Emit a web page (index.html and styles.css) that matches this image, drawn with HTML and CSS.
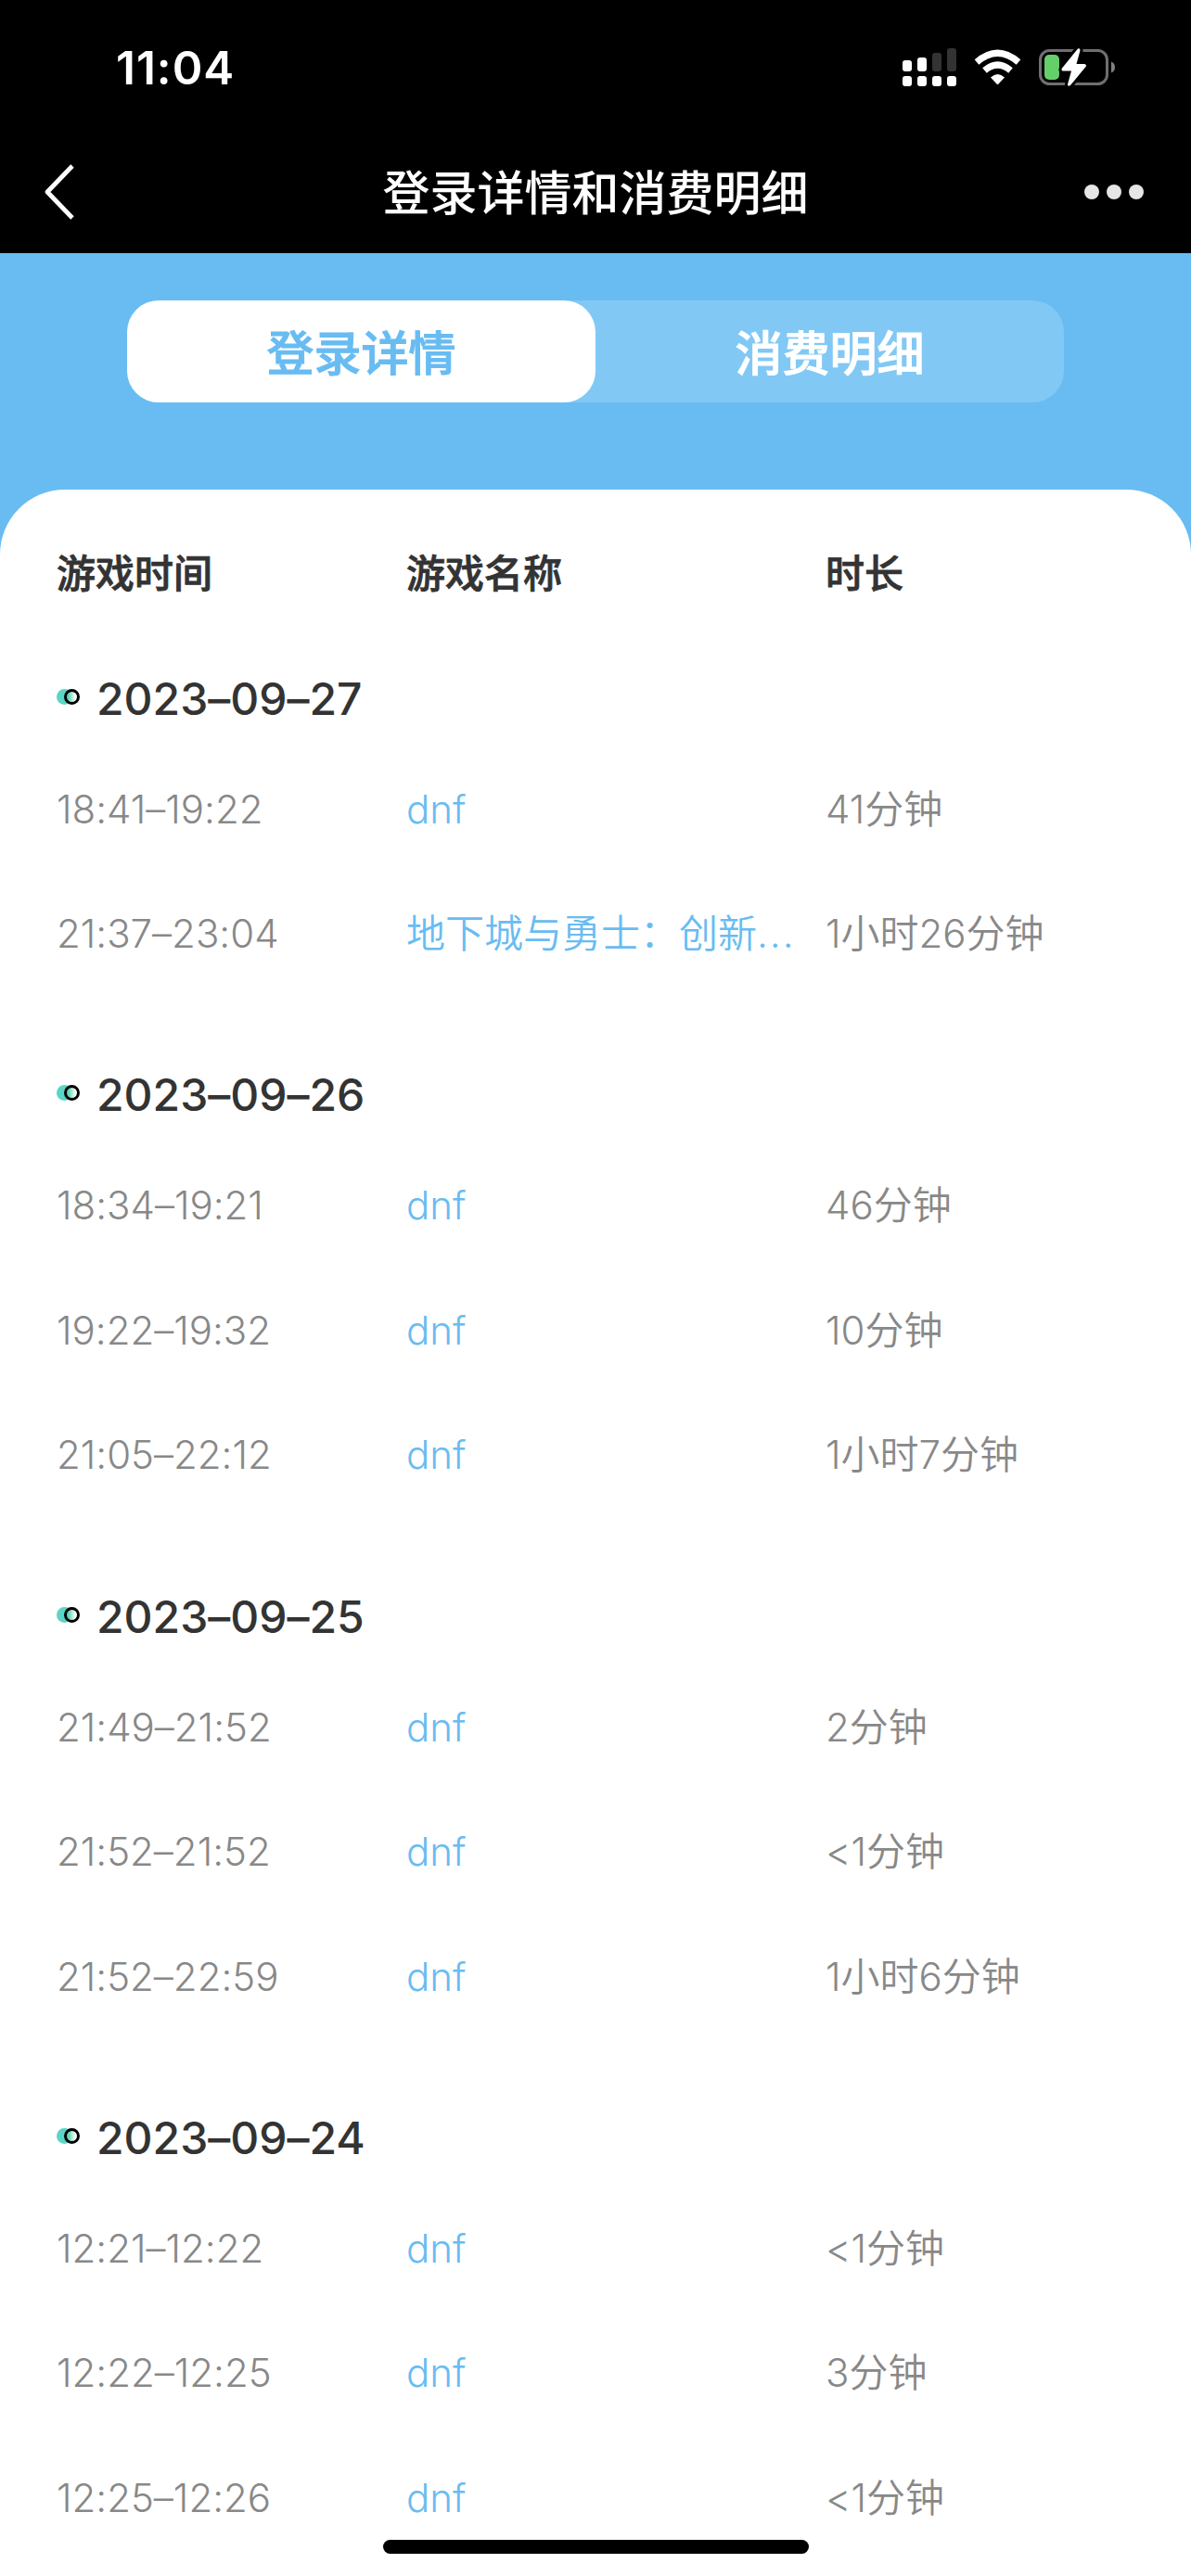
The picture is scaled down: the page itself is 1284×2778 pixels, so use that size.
FILE: index.html
```html
<!DOCTYPE html>
<html lang="zh-CN">

<head>
  <meta charset="UTF-8" />
  <meta name="viewport" content="width=device-width, initial-scale=1.0" />
  <title>登录详情和消费明细</title>
  <link rel="stylesheet" href="styles.css">
</head>

<body>
  <div id="app">
    <header>
      <div class="status-bar">
        <span class="clock">11:04</span>
        <svg class="status-icons" width="232" height="44" viewBox="0 0 232 44">
          <!-- 信号 -->
          <g fill="#fff">
            <rect x="3" y="15" width="10" height="12" rx="3" />
            <rect x="19" y="12" width="10" height="15" rx="3" />
            <rect x="3" y="32" width="10" height="11" rx="3" />
            <rect x="19" y="32" width="10" height="11" rx="3" />
            <rect x="35" y="32" width="10" height="11" rx="3" />
            <rect x="51" y="32" width="10" height="11" rx="3" />
          </g>
          <g fill="#333">
            <rect x="35" y="7" width="10" height="20" rx="3" />
            <rect x="51" y="2" width="10" height="25" rx="3" />
          </g>
          <!-- wifi -->
          <g fill="none" stroke="#fff" stroke-width="7">
            <path d="M83 17 Q105.500 -2.500 128 17" />
            <path d="M91.500 26 Q105.500 14 119.500 26" />
          </g>
          <path d="M98 33.500 Q105.500 26.500 113 33.500 L106.500 40.500 Q105.500 41.500 104.500 40.500 Z" fill="#fff" />
          <!-- 电池 -->
          <rect x="151.500" y="4.500" width="72" height="36" rx="10" fill="none" stroke="#706e72" stroke-width="3" />
          <path d="M228 16.500 Q232 18 232 22.500 Q232 27 228 28.500 Z" fill="#808080" />
          <rect x="156" y="9" width="16" height="27" rx="5" fill="#65cf69" />
          <path d="M192 2.500 Q194.500 1.500 194.500 4.500 L190.500 19 L199 19 Q202 19.500 200.500 22 L184 42 Q181 44 181 41 L185 26.500 L176 26.500 Q173.500 26 175 23.500 Z" fill="#fff" stroke="#000" stroke-width="6" paint-order="stroke" />
        </svg>
      </div>
      <div class="nav-bar">
        <svg class="back" width="34" height="60" viewBox="0 0 34 60">
          <path d="M31 2 L4 30 L31 58" fill="none" stroke="#fff" stroke-width="4.800" stroke-linejoin="round" />
        </svg>
        <h1>登录详情和消费明细</h1>
        <div class="more"><i></i><i></i><i></i></div>
      </div>
    </header>

    <div class="tabs">
      <div class="tab active">登录详情</div>
      <div class="tab">消费明细</div>
    </div>

    <main>
      <div class="row head"><span>游戏时间</span><span>游戏名称</span><span>时长</span></div>

      <section>
        <h2><i class="mark"></i>2023–09–27</h2>
        <div class="row"><span>18:41–19:22</span><span class="name">dnf</span><span>41分钟</span></div>
        <div class="row"><span>21:37–23:04</span><span class="name">地下城与勇士：创新<span class="dots">...</span></span><span>1小时26分钟</span></div>
      </section>

      <section>
        <h2><i class="mark"></i>2023–09–26</h2>
        <div class="row"><span>18:34–19:21</span><span class="name">dnf</span><span>46分钟</span></div>
        <div class="row"><span>19:22–19:32</span><span class="name">dnf</span><span>10分钟</span></div>
        <div class="row"><span>21:05–22:12</span><span class="name">dnf</span><span>1小时7分钟</span></div>
      </section>

      <section>
        <h2><i class="mark"></i>2023–09–25</h2>
        <div class="row"><span>21:49–21:52</span><span class="name">dnf</span><span>2分钟</span></div>
        <div class="row"><span>21:52–21:52</span><span class="name">dnf</span><span>&lt;1分钟</span></div>
        <div class="row"><span>21:52–22:59</span><span class="name">dnf</span><span>1小时6分钟</span></div>
      </section>

      <section>
        <h2><i class="mark"></i>2023–09–24</h2>
        <div class="row"><span>12:21–12:22</span><span class="name">dnf</span><span>&lt;1分钟</span></div>
        <div class="row"><span>12:22–12:25</span><span class="name">dnf</span><span>3分钟</span></div>
        <div class="row"><span>12:25–12:26</span><span class="name">dnf</span><span>&lt;1分钟</span></div>
      </section>
    </main>

    <div class="home-indicator"></div>
  </div>
</body>

</html>
```

FILE: styles.css
```css
*,
*::before,
*::after {
  box-sizing: border-box;
  margin: 0;
  padding: 0;
}

body {
  font-family: Inter, "Noto Sans CJK SC", sans-serif;
  background-color: #fff;
}

#app {
  position: relative;
  width: 1284px;
  height: 2778px;
  overflow: hidden;
  background-color: #68bcf2;
}

header {
  height: 273px;
  background-color: #000;
  color: #fff;
}

.status-bar {
  display: flex;
  justify-content: space-between;
  height: 145px;
  padding: 50px 82px 0 125px;
}

.clock {
  font-size: 49.500px;
  line-height: 47px;
  font-weight: 600;
  letter-spacing: 1px;
}

.nav-bar {
  display: flex;
  align-items: center;
  justify-content: space-between;
  height: 124px;
  padding: 0 51px 0 47px;
}

.back {
  margin-right: 34px;
}

h1 {
  padding-top: 4px;
  font-size: 51px;
  font-weight: 500;
  line-height: 70px;
}

.more {
  display: flex;
  gap: 8px;
}

.more i {
  width: 16px;
  height: 16px;
  border-radius: 50%;
  background-color: #e6e6e6;
}

.tabs {
  display: flex;
  width: 1010px;
  height: 110px;
  margin: 51px auto 94px;
  border-radius: 34px;
  background-color: #81c8f5;
}

.tab {
  flex: 1;
  border-radius: 34px;
  color: #fff;
  font-size: 51px;
  font-weight: 500;
  -webkit-text-stroke: 1px;
  line-height: 116px;
  text-align: center;
}

.tab.active {
  background-color: #fff;
  color: #68bcf2;
}

main {
  height: 2250px;
  padding: 24px 0 0 61px;
  border-radius: 70px 70px 0 0;
  background-color: #fff;
  font-feature-settings: "calt" 0;
}

.row {
  display: grid;
  grid-template-columns: 377px 452px 1fr;
  height: 134.600px;
  line-height: 134.600px;
  font-size: 42px;
  font-weight: 350;
  color: #888;
  white-space: nowrap;
}

.row.head {
  font-weight: 500;
  -webkit-text-stroke: 0.8px;
  color: #333;
}

.name {
  color: #68bcf2;
}

.dots {
  letter-spacing: 2px;
}

section {
  padding-bottom: 39.500px;
}

h2 {
  display: flex;
  align-items: center;
  height: 101px;
  margin-bottom: 18px;
  padding-top: 33px;
  font-size: 48px;
  font-weight: 500;
  line-height: 68px;
  color: #333;
}

/* 日期前的小圆点 */
.mark {
  position: relative;
  width: 25px;
  height: 18px;
  margin-right: 18px;
  top: -2px;
}

.mark::before,
.mark::after {
  content: "";
  position: absolute;
  top: 0;
  width: 17px;
  height: 17px;
  border-radius: 50%;
}

.mark::before {
  left: 0;
  background-color: #5bd5c6;
}

.mark::after {
  right: 0;
  border: 3px solid #000;
  background: linear-gradient(90deg, #62d6b2 20%, #fff 85%);
}

.home-indicator {
  position: absolute;
  left: 413px;
  bottom: 24px;
  width: 459px;
  height: 15px;
  border-radius: 8px;
  background-color: #000;
}
```
